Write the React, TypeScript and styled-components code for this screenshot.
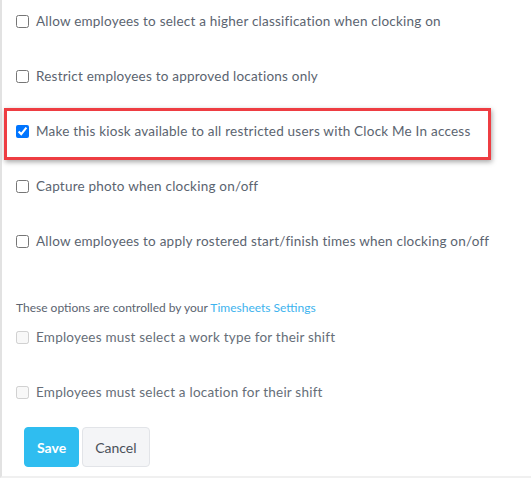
import styled, { createGlobalStyle } from 'styled-components';

const GlobalStyle = createGlobalStyle`
    html, body {
        margin: 0;
        padding: 0;
        background: #ffffff;
    }
`;

const Panel = styled.div`
    font-family: 'Lato', 'Liberation Sans', sans-serif;
    color: #5b6470;
    width: 531px;
    height: 478px;
    box-sizing: border-box;
    border-left: 2px solid #e2e2e2;
    border-bottom: 2px solid #f0f0f0;
    padding: 11px 0 0 14px;
`;

const OptionList = styled.div`
    display: flex;
    flex-direction: column;
    gap: 35px;
`;

const Option = styled.label<{ $disabled?: boolean }>`
    display: flex;
    align-items: center;
    gap: 7px;
    height: 20px;
    font-size: 13.5px;
    letter-spacing: 0.22px;
    color: ${(p) => (p.$disabled ? '#666e78' : '#5b6470')};
    position: relative;

    input {
        margin: 0;
        width: 13px;
        height: 13px;
    }
`;

const Highlight = styled(Option)`
    &::after {
        content: '';
        position: absolute;
        left: -12px;
        top: -13px;
        width: 481px;
        height: 46px;
        border: 3px solid #ee3d42;
        box-shadow: 1px 2px 5px rgba(0, 0, 0, 0.35);
        pointer-events: none;
    }
`;

const Note = styled.div`
    font-size: 12px;
    line-height: 16px;
    color: #5b6470;
    margin: 49px 0 11px;

    a {
        color: #3db3ee;
        text-decoration: none;
    }
`;

const Actions = styled.div`
    display: flex;
    gap: 3px;
    margin: 25px 0 0 8px;
`;

const Button = styled.button<{ $primary?: boolean }>`
    font-family: 'Lato', 'Liberation Sans', sans-serif;
    font-size: 14px;
    font-weight: ${(p) => (p.$primary ? 700 : 400)};
    height: 40px;
    padding: 0 ${(p) => (p.$primary ? '12px' : '12px')};
    border-radius: 4px;
    border: 1px solid ${(p) => (p.$primary ? '#2fbdf0' : '#e2e4e8')};
    background: ${(p) => (p.$primary ? '#2fbdf0' : '#f4f5f7')};
    color: ${(p) => (p.$primary ? '#ffffff' : '#4a515a')};
    cursor: pointer;
`;

const OPTIONS = [
    'Allow employees to select a higher classification when clocking on',
    'Restrict employees to approved locations only',
];

const MORE_OPTIONS = [
    'Capture photo when clocking on/off',
    'Allow employees to apply rostered start/finish times when clocking on/off',
];

const TIMESHEET_OPTIONS = [
    'Employees must select a work type for their shift',
    'Employees must select a location for their shift',
];

const App = () => {
    return (
        <>
            <GlobalStyle />
            <Panel>
                <OptionList>
                    {OPTIONS.map((label, key) => (
                        <Option key={key}>
                            <input type="checkbox" />
                            {label}
                        </Option>
                    ))}
                    <Highlight>
                        <input type="checkbox" defaultChecked />
                        Make this kiosk available to all restricted users with Clock Me In access
                    </Highlight>
                    {MORE_OPTIONS.map((label, key) => (
                        <Option key={key}>
                            <input type="checkbox" />
                            {label}
                        </Option>
                    ))}
                </OptionList>

                <Note>
                    These options are controlled by your <a href="#">Timesheets Settings</a>
                </Note>

                <OptionList>
                    {TIMESHEET_OPTIONS.map((label, key) => (
                        <Option $disabled key={key}>
                            <input type="checkbox" disabled />
                            {label}
                        </Option>
                    ))}
                </OptionList>

                <Actions>
                    <Button $primary>Save</Button>
                    <Button>Cancel</Button>
                </Actions>
            </Panel>
        </>
    );
};

export default App;
